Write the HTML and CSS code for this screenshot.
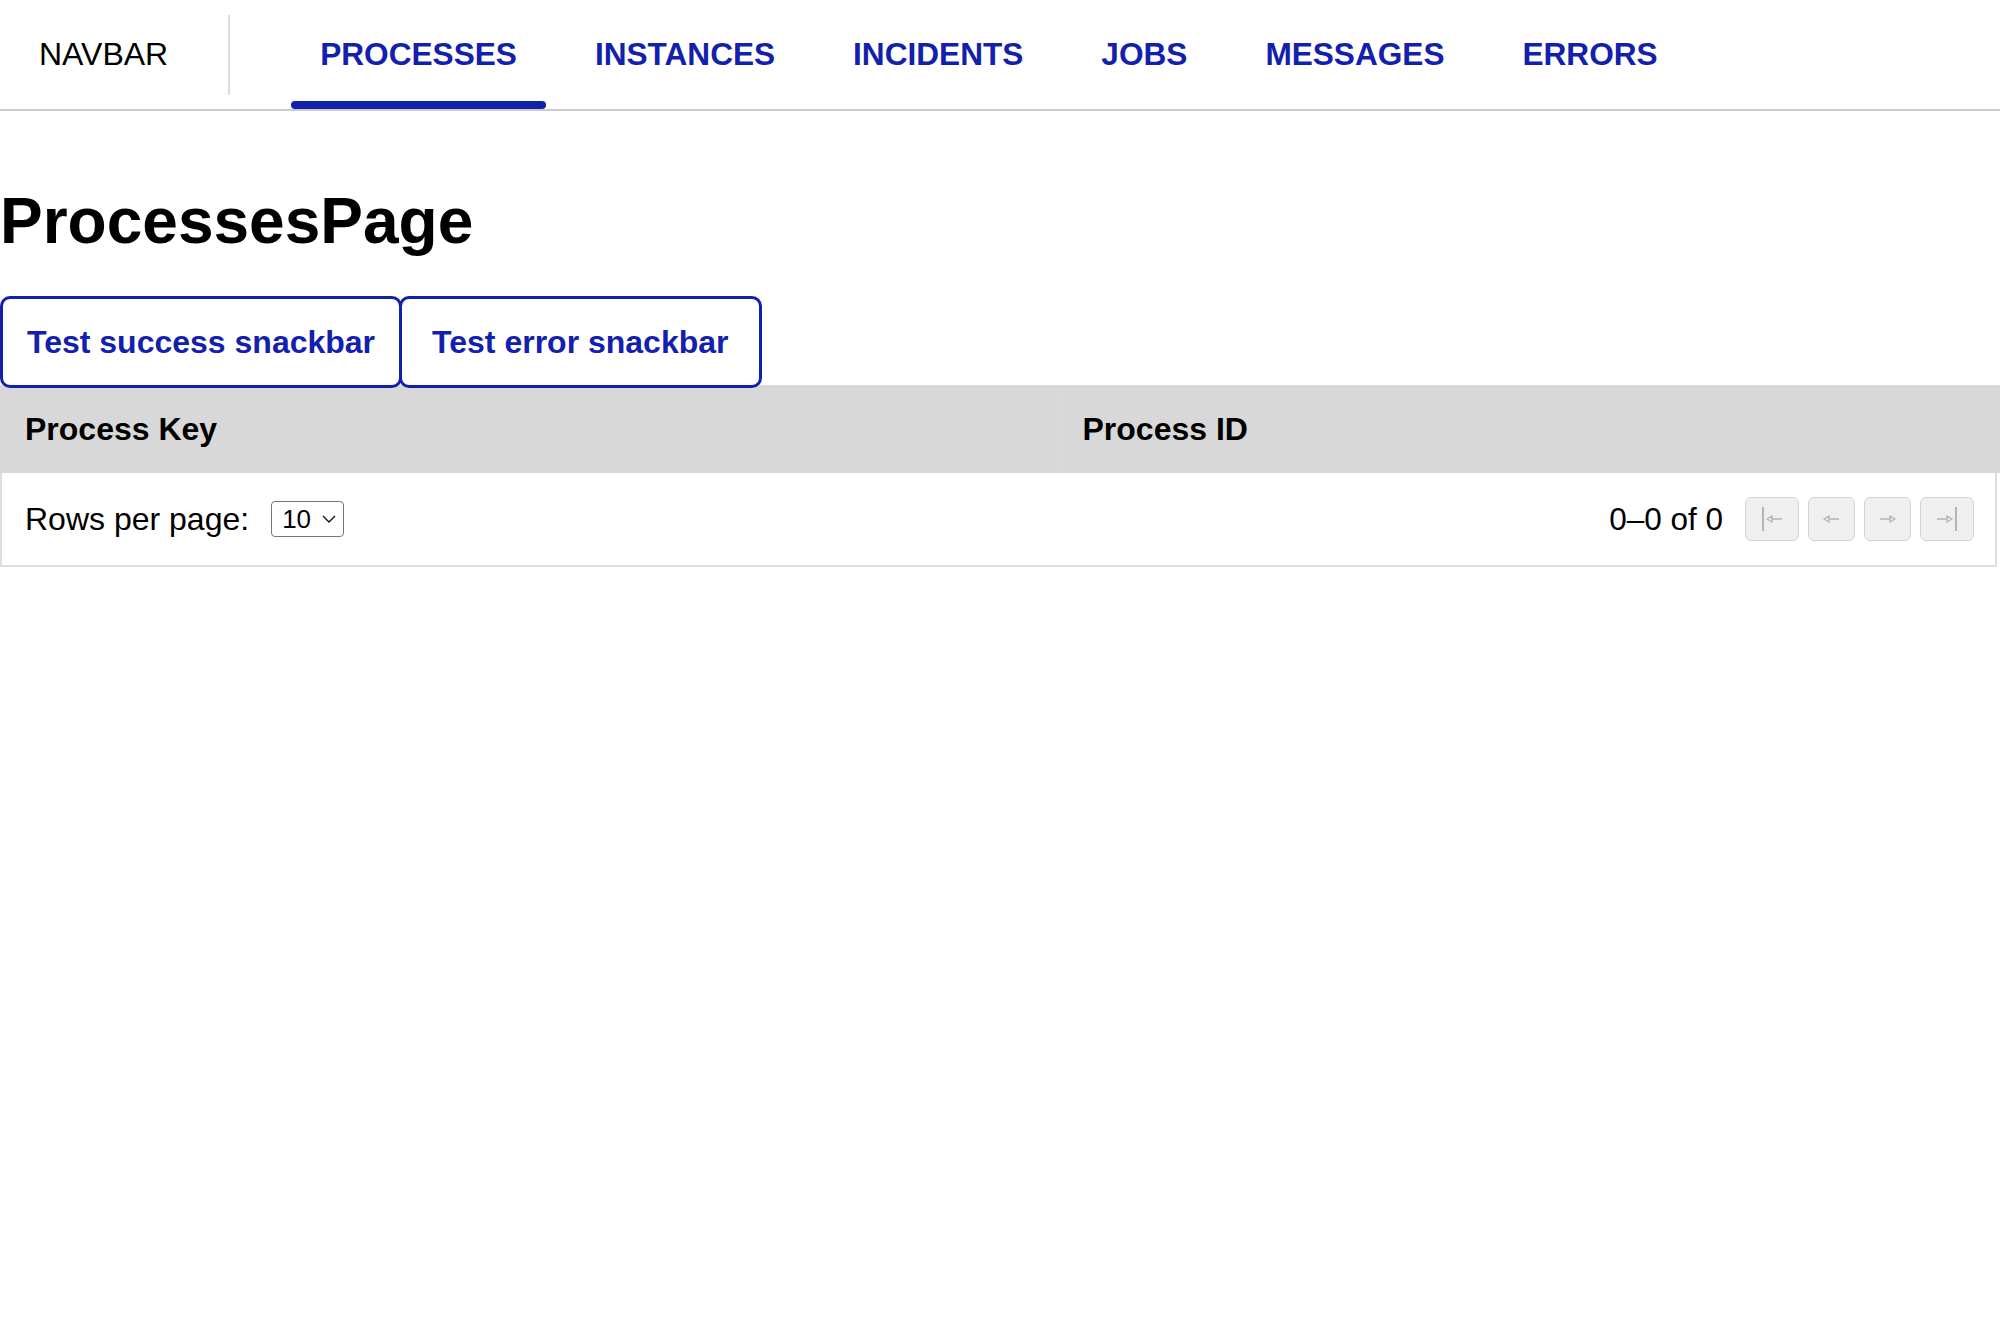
FILE: index.html
```html
<!DOCTYPE html>
<html lang="en">
<head>
<meta charset="utf-8">
<title>ProcessesPage</title>
<link rel="stylesheet" href="styles.css">
</head>
<body>
<nav class="navbar">
  <div class="brand">NAVBAR</div>
  <div class="divider"></div>
  <div class="tabs">
    <a class="tab active">PROCESSES</a>
    <a class="tab">INSTANCES</a>
    <a class="tab">INCIDENTS</a>
    <a class="tab">JOBS</a>
    <a class="tab">MESSAGES</a>
    <a class="tab">ERRORS</a>
  </div>
</nav>
<main class="page">
  <h1 class="title">ProcessesPage</h1>
  <div class="actions">
    <button class="btn">Test success snackbar</button>
    <button class="btn btn-error">Test error snackbar</button>
  </div>
  <div class="table">
    <div class="thead">
      <div class="th">Process Key</div>
      <div class="th th-id">Process ID</div>
    </div>
    <div class="tfoot">
      <div class="rows">
        <span>Rows per page:</span>
        <div class="select">
          <span>10</span>
          <svg class="chev" width="14" height="8" viewBox="0 0 14 8"><path d="M1 1 L7 7 L13 1" fill="none" stroke="#111" stroke-width="1.4"/></svg>
        </div>
      </div>
      <div class="pager">
        <span class="count">0–0 of 0</span>
        <button class="pbtn wide" disabled>
          <svg width="22" height="26" viewBox="0 0 22 26"><path d="M2 1 V25" stroke="#b4b4b4" stroke-width="2"/><path d="M6 13 L11 10 L11 16 Z M11 13 H21" fill="none" stroke="#b4b4b4" stroke-width="1.4" stroke-linejoin="round"/></svg>
        </button>
        <button class="pbtn" disabled>
          <svg width="17" height="10" viewBox="0 0 17 10"><path d="M1 5 L6 2 L6 8 Z M6 5 H16" fill="none" stroke="#b4b4b4" stroke-width="1.4" stroke-linejoin="round"/></svg>
        </button>
        <button class="pbtn" disabled>
          <svg width="17" height="10" viewBox="0 0 17 10"><path d="M16 5 L11 2 L11 8 Z M11 5 H1" fill="none" stroke="#b4b4b4" stroke-width="1.4" stroke-linejoin="round"/></svg>
        </button>
        <button class="pbtn wide" disabled>
          <svg width="22" height="26" viewBox="0 0 22 26"><path d="M20 1 V25" stroke="#b4b4b4" stroke-width="2"/><path d="M16 13 L11 10 L11 16 Z M11 13 H1" fill="none" stroke="#b4b4b4" stroke-width="1.4" stroke-linejoin="round"/></svg>
        </button>
      </div>
    </div>
  </div>
</main>
</body>
</html>
```

FILE: styles.css
```css
* {
  box-sizing: border-box;
}

html, body {
  margin: 0;
  padding: 0;
  background: #ffffff;
}

body {
  font-family: "Liberation Sans", Arial, Helvetica, sans-serif;
  color: #000000;
}

.navbar {
  display: flex;
  align-items: stretch;
  height: 111px;
  border-bottom: 2px solid #cccccc;
}

.brand {
  display: flex;
  align-items: center;
  padding-left: 39px;
  font-size: 32px;
  font-weight: 400;
}

.divider {
  align-self: flex-start;
  margin-top: 15px;
  margin-left: 60px;
  width: 2px;
  height: 80px;
  background: #dddddd;
}

.tabs {
  display: flex;
  gap: 20px;
  margin-left: 61px;
}

.tab {
  position: relative;
  display: flex;
  align-items: center;
  padding: 0 29px;
  font-size: 31.6px;
  font-weight: 700;
  color: #1220ad;
  text-decoration: none;
}

.tab.active::after {
  content: "";
  position: absolute;
  left: 0;
  right: 0;
  bottom: 0;
  height: 8px;
  border-radius: 4px;
  background: #1220ad;
}

.title {
  margin: 74px 0 39px 0;
  font-size: 64px;
  line-height: 72px;
  font-weight: 700;
}

.actions {
  position: relative;
  z-index: 1;
  display: flex;
  margin-bottom: -3px;
}

.btn {
  font-family: "Liberation Sans", Arial, Helvetica, sans-serif;
  font-size: 32px;
  font-weight: 700;
  line-height: 37px;
  color: #1220ad;
  background: #ffffff;
  border: 3px solid #1220ad;
  border-radius: 10px;
  padding: 24.5px 24px;
}

.btn-error {
  margin-left: -3.5px;
  padding-left: 30.5px;
  padding-right: 30.5px;
}

.table {
  margin-right: 3px;
}

.thead {
  display: grid;
  grid-template-columns: 1058px 1fr;
  height: 88px;
  background: #d8d8d8;
  margin-right: -3px;
}

.th {
  display: flex;
  align-items: center;
  padding-left: 25px;
  font-size: 32px;
  font-weight: 700;
}

.th-id {
  padding-left: 23.5px;
  border-left: 1px solid #dadada;
}

.tfoot {
  display: flex;
  align-items: center;
  justify-content: space-between;
  height: 94px;
  border: 2px solid #dddddd;
  border-top: 0;
  padding: 0 21px 0 23px;
}

.rows {
  display: flex;
  align-items: center;
  font-size: 32px;
}

.select {
  display: flex;
  align-items: center;
  gap: 11px;
  margin-left: 22px;
  width: 73px;
  height: 36px;
  padding-left: 10px;
  border: 1.5px solid #767676;
  border-radius: 4px;
  font-size: 26px;
}

.chev {
  display: block;
}

.pager {
  display: flex;
  align-items: center;
  gap: 9.5px;
}

.count {
  font-size: 31.5px;
  margin-right: 12px;
}

.pbtn {
  display: flex;
  align-items: center;
  justify-content: center;
  width: 46.5px;
  height: 43.5px;
  padding: 0;
  background: #efefef;
  border: 1.5px solid #d4d4d4;
  border-radius: 6px;
}

.pbtn.wide {
  width: 54px;
}

.pbtn svg {
  display: block;
}
```
